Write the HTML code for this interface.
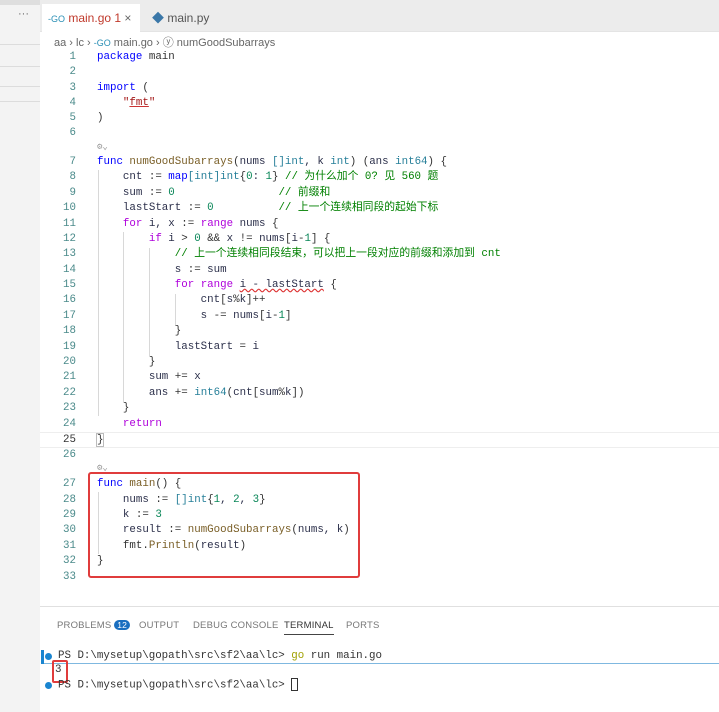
<!DOCTYPE html>
<html><head><meta charset="utf-8"><style>
*{margin:0;padding:0;box-sizing:border-box}
body{width:719px;height:712px;background:#fff;position:relative;overflow:hidden;font-family:"Liberation Sans","Noto Sans CJK SC",sans-serif}
.side{position:absolute;left:0;top:0;width:40px;height:712px;background:#f3f3f3}
.side i{position:absolute;left:0;width:40px;height:1px;background:#dcdcdc}
.top{position:absolute;left:40px;top:0;width:679px;height:32px;background:#ececec;border-bottom:1px solid #e4e4e4}
.tab{position:absolute;top:4px;height:28px;font-size:12px;line-height:28px;color:#555}
.crumb{position:absolute;left:54px;top:34px;font-size:11px;color:#666}
.ln{position:absolute;left:40px;width:36px;text-align:right;font:10.8px/16px "Liberation Mono","Noto Sans CJK SC",monospace;color:#4a8a8a}
.cd{position:absolute;left:97px;white-space:pre;font:10.8px/16px "Liberation Mono","Noto Sans CJK SC",monospace;color:#2b2f4a}
.k{color:#0000ff}.c{color:#af00db}.f{color:#795e26}.t{color:#267f99}.s{color:#a31515}.n{color:#098658}.m{color:#008000}.p{color:#333}
.guide{position:absolute;width:1px;background:#d8d8d8}
.panel{position:absolute;left:40px;top:606px;width:679px;border-top:1px solid #e0e0e0}
.pt{position:absolute;top:620px;font-size:9.5px;color:#777;letter-spacing:.2px}
.term{position:absolute;left:58px;white-space:pre;font:10.8px/14px "Liberation Mono",monospace;color:#333}
.dot{position:absolute;left:45px;width:7px;height:7px;border-radius:50%;background:#1a85d0}
</style></head><body>
<div class="side"><i style="top:44px"></i><i style="top:66px"></i><i style="top:86px"></i><i style="top:101px"></i></div>
<div style="position:absolute;left:0;top:0;width:719px;height:5px;background:#dedede"></div>
<div class="top">
 <div style="position:absolute;left:-22px;top:8px;font-size:11px;color:#666">···</div>
 <div class="tab" style="left:2px;width:98px;background:#fff;padding-left:6px"><span style="color:#2a8fb5;font-size:9px">-GO</span> <span style="color:#c0392b">main.go</span> <span style="color:#c0392b">1</span> <span style="color:#666">×</span></div>
 <div class="tab" style="left:108px;padding-left:4px"><span style="color:#3a77a8">◆</span> main.py</div>
</div>
<div class="crumb">aa › lc › <span style="color:#2a8fb5;font-size:9px">-GO</span> main.go › ⓨ numGoodSubarrays</div>

<div class="guide" style="left:98px;top:170px;height:246px"></div>
<div class="guide" style="left:123px;top:232px;height:170px"></div>
<div class="guide" style="left:149px;top:248px;height:108px"></div>
<div class="guide" style="left:175px;top:294px;height:32px"></div>
<div class="guide" style="left:98px;top:492px;height:62px"></div>
<div style="position:absolute;left:40px;top:432px;width:679px;height:16px;border-top:1px solid #eee;border-bottom:1px solid #eee"></div>

<div class="ln" style="top:49px">1</div><div class="cd" style="top:49px"><span class="k">package</span> <span class="p">main</span></div>
<div class="ln" style="top:64px">2</div>
<div class="ln" style="top:80px">3</div><div class="cd" style="top:80px"><span class="k">import</span> <span class="p">(</span></div>
<div class="ln" style="top:95px">4</div><div class="cd" style="top:95px">    <span class="s">"<u style="text-decoration-color:#c33">fmt</u>"</span></div>
<div class="ln" style="top:110px">5</div><div class="cd" style="top:110px"><span class="p">)</span></div>
<div class="ln" style="top:125px">6</div>
<div class="cd" style="top:139px;color:#999;font-size:9px">⚙⌄</div>
<div class="ln" style="top:154px">7</div><div class="cd" style="top:154px"><span class="k">func</span> <span class="f">numGoodSubarrays</span><span class="p">(</span>nums <span class="t">[]int</span>, k <span class="t">int</span><span class="p">) (</span>ans <span class="t">int64</span><span class="p">) {</span></div>
<div class="ln" style="top:169px">8</div><div class="cd" style="top:169px">    cnt <span class="p">:=</span> <span class="k">map</span><span class="t">[int]int</span><span class="p">{</span><span class="n">0</span>: <span class="n">1</span><span class="p">}</span> <span class="m">// 为什么加个 0? 见 560 题</span></div>
<div class="ln" style="top:185px">9</div><div class="cd" style="top:185px">    sum <span class="p">:=</span> <span class="n">0</span>                <span class="m">// 前缀和</span></div>
<div class="ln" style="top:200px">10</div><div class="cd" style="top:200px">    lastStart <span class="p">:=</span> <span class="n">0</span>          <span class="m">// 上一个连续相同段的起始下标</span></div>
<div class="ln" style="top:216px">11</div><div class="cd" style="top:216px">    <span class="c">for</span> i, x <span class="p">:=</span> <span class="c">range</span> nums <span class="p">{</span></div>
<div class="ln" style="top:231px">12</div><div class="cd" style="top:231px">        <span class="c">if</span> i <span class="p">&gt;</span> <span class="n">0</span> <span class="p">&amp;&amp;</span> x <span class="p">!=</span> nums<span class="p">[</span>i<span class="p">-</span><span class="n">1</span><span class="p">] {</span></div>
<div class="ln" style="top:246px">13</div><div class="cd" style="top:246px">            <span class="m">// 上一个连续相同段结束，可以把上一段对应的前缀和添加到 cnt</span></div>
<div class="ln" style="top:262px">14</div><div class="cd" style="top:262px">            s <span class="p">:=</span> sum</div>
<div class="ln" style="top:277px">15</div><div class="cd" style="top:277px">            <span class="c">for</span> <span class="c">range</span> <u style="text-decoration:underline wavy #d33">i - lastStart</u> <span class="p">{</span></div>
<div class="ln" style="top:292px">16</div><div class="cd" style="top:292px">                cnt<span class="p">[</span>s<span class="p">%</span>k<span class="p">]++</span></div>
<div class="ln" style="top:308px">17</div><div class="cd" style="top:308px">                s <span class="p">-=</span> nums<span class="p">[</span>i<span class="p">-</span><span class="n">1</span><span class="p">]</span></div>
<div class="ln" style="top:323px">18</div><div class="cd" style="top:323px">            <span class="p">}</span></div>
<div class="ln" style="top:339px">19</div><div class="cd" style="top:339px">            lastStart <span class="p">=</span> i</div>
<div class="ln" style="top:354px">20</div><div class="cd" style="top:354px">        <span class="p">}</span></div>
<div class="ln" style="top:369px">21</div><div class="cd" style="top:369px">        sum <span class="p">+=</span> x</div>
<div class="ln" style="top:385px">22</div><div class="cd" style="top:385px">        ans <span class="p">+=</span> <span class="t">int64</span><span class="p">(</span>cnt<span class="p">[</span>sum<span class="p">%</span>k<span class="p">])</span></div>
<div class="ln" style="top:400px">23</div><div class="cd" style="top:400px">    <span class="p">}</span></div>
<div class="ln" style="top:416px">24</div><div class="cd" style="top:416px">    <span class="c">return</span></div>
<div class="ln" style="top:432px;color:#333">25</div><div class="cd" style="top:432px"><span class="p" style="outline:1px solid #bbb">}</span></div>
<div class="ln" style="top:447px">26</div>
<div class="cd" style="top:460px;color:#999;font-size:9px">⚙⌄</div>
<div class="ln" style="top:476px">27</div><div class="cd" style="top:476px"><span class="k">func</span> <span class="f">main</span><span class="p">() {</span></div>
<div class="ln" style="top:492px">28</div><div class="cd" style="top:492px">    nums <span class="p">:=</span> <span class="t">[]int</span><span class="p">{</span><span class="n">1</span>, <span class="n">2</span>, <span class="n">3</span><span class="p">}</span></div>
<div class="ln" style="top:507px">29</div><div class="cd" style="top:507px">    k <span class="p">:=</span> <span class="n">3</span></div>
<div class="ln" style="top:522px">30</div><div class="cd" style="top:522px">    result <span class="p">:=</span> <span class="f">numGoodSubarrays</span><span class="p">(</span>nums, k<span class="p">)</span></div>
<div class="ln" style="top:538px">31</div><div class="cd" style="top:538px">    <span class="p">fmt.</span><span class="f">Println</span><span class="p">(</span>result<span class="p">)</span></div>
<div class="ln" style="top:553px">32</div><div class="cd" style="top:553px"><span class="p">}</span></div>
<div class="ln" style="top:569px">33</div>
<div style="position:absolute;left:88px;top:472px;width:272px;height:106px;border:2.5px solid #e03c3c;border-radius:3px"></div>

<div class="panel"></div>
<div class="pt" style="left:57px">PROBLEMS <span style="display:inline-block;background:#1a6fc0;color:#fff;border-radius:7px;padding:0 3px;font-size:8.5px">12</span></div>
<div class="pt" style="left:139px">OUTPUT</div>
<div class="pt" style="left:193px">DEBUG CONSOLE</div>
<div class="pt" style="left:284px;color:#333;border-bottom:1px solid #444;padding-bottom:3px">TERMINAL</div>
<div class="pt" style="left:346px">PORTS</div>
<div style="position:absolute;left:41px;top:650px;width:3px;height:14px;background:#1a85d0"></div>
<div style="position:absolute;left:44px;top:663px;width:675px;height:1px;background:#7fb8e0"></div>
<div class="dot" style="top:653px"></div>
<div class="term" style="top:649px">PS D:\mysetup\gopath\src\sf2\aa\lc&gt; <span style="color:#a0a000">go</span> run main.go</div>
<div class="term" style="top:663px;left:55px">3</div>
<div style="position:absolute;left:52px;top:660px;width:16px;height:23px;border:2.5px solid #e03c3c;border-radius:2px"></div>
<div class="dot" style="top:682px"></div>
<div class="term" style="top:678px">PS D:\mysetup\gopath\src\sf2\aa\lc&gt; <span style="display:inline-block;width:7px;height:13px;border:1px solid #333;vertical-align:middle"></span></div>
</body></html>
